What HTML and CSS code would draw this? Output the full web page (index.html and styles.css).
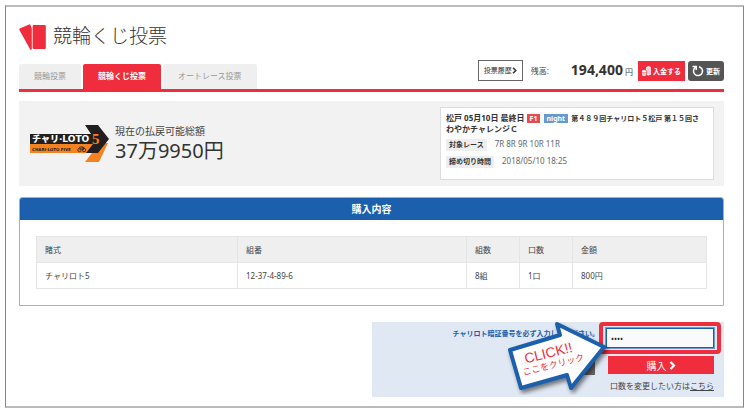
FILE: index.html
```html
<!DOCTYPE html>
<html lang="ja">
<head>
    <meta charset="UTF-8">
    <meta name="viewport" content="width=device-width, initial-scale=1.0">
    <title>競輪くじ投票</title>
    <link rel="stylesheet" href="styles.css">
</head>
<body>
    <div class="container">
        <h1 class="page-title">
            <svg class="ticket-icon" width="27" height="27" viewBox="0 0 27 27" fill="#f02d3c">
                <path d="M1.300 4.300 L10 .4 Q11 0 11.500 1 L12.800 4.500 V25 Q12.300 26.600 11.200 25.600 L.4 6 Q-.1 4.900 1.300 4.300Z"/>
                <rect x="13.600" y="1" width="13.200" height="24" rx="1"/>
            </svg>
            競輪くじ投票
        </h1>

        <div class="nav-bar">
            <nav class="tabs">
                <a class="tab" href="#">競輪投票</a>
                <a class="tab active" href="#">競輪くじ投票</a>
                <a class="tab" href="#">オートレース投票</a>
            </nav>
            <div class="account">
                <a class="history" href="#">投票履歴
                    <svg width="5" height="7" viewBox="0 0 5 7"><path d="M1 .8 L3.800 3.500 L1 6.200" fill="none" stroke="#333" stroke-width="1.500"/></svg>
                </a>
                <span class="balance-label">残高:</span>
                <span class="balance"><strong>194,400</strong> 円</span>
                <button class="btn deposit" type="button">
                    <svg width="9" height="10" viewBox="0 0 9 10" fill="#fff"><path d="M4 1.200 Q6.500 -.6 9 1.200 V8.600 Q6.500 10 4.800 9 V4.200 H4Z"/><path d="M0 4.600 Q2 3.400 4.200 4.600 V9.300 Q2 10.500 0 9.300Z"/><path d="M0 6.500 H4.200 M0 8.100 H4.200 M4.800 3 H9 M4.800 5 H9 M4.800 7 H9" stroke="#f02d3c" stroke-width=".5"/></svg>
                    入金する
                </button>
                <button class="btn reload" type="button">
                    <svg width="12" height="12" viewBox="0 0 12 12" fill="none" stroke="#fff" stroke-width="1.500"><path d="M7 1.700 A4.500 4.500 0 1 1 2.300 3.500 L3.800 1.700"/><path d="M.5 1.600 H4.200 V5"/></svg>
                    更新
                </button>
            </div>
        </div>

        <div class="summary">
            <svg class="loto-logo" width="80" height="38" viewBox="0 0 80 38">
                <path d="M0 18 H62 L78 18 L69 37 H55 L62 28 H0Z" fill="#f58220"/>
                <path d="M0 9 H61 L55 0 H68 L79 14 L68 28 H56 L63 19 H0Z" fill="#231f20"/>
                <text x="2" y="17" class="logo-name">チャリ·LOTO</text>
                <text x="62" y="19" class="logo-five">5</text>
                <text x="2" y="26" class="logo-sub">CHARI·LOTO FIVE</text>
                <g fill="none" stroke="#231f20" stroke-width=".8"><circle cx="49.500" cy="25" r="1.700"/><circle cx="54" cy="25" r="1.700"/><path d="M49 22.500 Q52 20.500 54.500 23 M49.500 25 L52 22.500 L54 25"/></g>
            </svg>
            <div class="payout">
                <div class="payout-label">現在の払戻可能総額</div>
                <div class="payout-amount">37万9950円</div>
            </div>
            <div class="race">
                <div class="race-title">
                    松戸 05月10日 最終日 <span class="badge grade">F1</span> <span class="badge night">night</span> <span class="race-name">第４８９回チャリロト５松戸 第１５回さ<br></span>わやかチャレンジＣ
                </div>
                <div class="race-row"><span class="race-key">対象レース</span>7R 8R 9R 10R 11R</div>
                <div class="race-row"><span class="race-key">締め切り時間</span>2018/05/10 18:25</div>
            </div>
        </div>

        <section class="purchase">
            <h2>購入内容</h2>
            <div class="purchase-body">
                <table>
                    <thead>
                        <tr>
                            <th class="col-type">賭式</th>
                            <th>組番</th>
                            <th class="col-count">組数</th>
                            <th class="col-count">口数</th>
                            <th class="col-price">金額</th>
                        </tr>
                    </thead>
                    <tbody>
                        <tr>
                            <td>チャリロト5</td>
                            <td>12-37-4-89-6</td>
                            <td>8組</td>
                            <td>1口</td>
                            <td>800円</td>
                        </tr>
                    </tbody>
                </table>
            </div>
        </section>

        <form class="confirm">
            <label class="pin-label" for="pin">チャリロト暗証番号を必ず入力してください。</label>
            <div class="pin-box"><input id="pin" type="password" value="1234"></div>
            <button class="back" type="button" aria-label="戻る"></button>
            <button class="buy" type="button">購入
                <svg width="7" height="9" viewBox="0 0 7 9"><path d="M1.500 1 L5 4.500 L1.500 8" fill="none" stroke="#fff" stroke-width="2.200"/></svg>
            </button>
            <p class="change">口数を変更したい方は<a href="#">こちら</a></p>

            <!-- arrow pointing at the PIN field -->
            <svg class="callout" width="108" height="76" viewBox="0 0 108 76">
                <path class="callout-arrow" d="M54 5 L101 28 L68 69 L64 56 L18 69 L7 31 L57 16Z"/>
                <g transform="rotate(-14 21 46)">
                    <text class="callout-click" x="23" y="45">CLICK!!</text>
                    <text class="callout-here" x="18" y="56">ここをクリック</text>
                </g>
            </svg>
        </form>
    </div>
</body>
</html>
```

FILE: styles.css
```css
* {
    box-sizing: border-box;
}

body {
    margin: 5px 6px 4px 5px;
    font-family: "Noto Sans", "Noto Sans CJK JP", sans-serif;
    font-size: 8px;
    line-height: 12px;
    color: #444;
    background-color: #fff;
}

button, input {
    font-family: inherit;
    font-size: 8px;
    margin: 0;
}

.container {
    padding: 15px 19px 9px 13px;
    border: 1px solid #858585;
    border-top: 2px solid #bbb;
    border-bottom: 2px solid #bbb;
}

.page-title {
    display: flex;
    align-items: center;
    gap: 7px;
    height: 28px;
    margin: 0 0 13px;
    font-size: 19px;
    line-height: 24px;
    font-weight: 300;
    color: #333;
}

.page-title .ticket-icon {
    margin-top: 2px;
}

/* tabs and balance */
.nav-bar {
    display: flex;
    justify-content: space-between;
    align-items: flex-start;
    border-bottom: 3px solid #f02d3c;
}

.tabs {
    display: flex;
    gap: 2px;
    padding-top: 1px;
}

.tab {
    padding: 6px 15px 7px;
    border-radius: 2px 2px 0 0;
    background-color: #efefef;
    color: #999;
    text-decoration: none;
}

.tab.active {
    background-color: #f02d3c;
    color: #fff;
    font-weight: bold;
}

.account {
    display: flex;
    align-items: center;
    margin-top: -3px;
}

.history {
    display: flex;
    align-items: center;
    height: 21px;
    padding: 0 5px;
    border: 1px solid #666;
    color: #333;
    font-size: 7px;
    text-decoration: none;
}

.balance-label {
    margin: 0 22px 0 8px;
}

.balance strong {
    font-size: 14px;
    color: #333;
}

.btn {
    display: flex;
    align-items: center;
    gap: 2px;
    height: 20px;
    padding: 0 4px;
    border: 0;
    color: #fff;
    font-size: 7px;
    font-weight: bold;
}

.deposit {
    margin: 0 3px 0 5px;
    background-color: #f02d3c;
}

.reload {
    border-radius: 3px;
    background-color: #555;
}

/* payout summary */
.summary {
    display: flex;
    align-items: center;
    margin-top: 9px;
    padding: 6px 10px 6px 11px;
    background-color: #f2f2f2;
}

.logo-name {
    font: 900 9px "DejaVu Sans", "Noto Sans CJK JP", sans-serif;
    fill: #fff;
}

.logo-five {
    font: bold 15px "Liberation Serif", serif;
    fill: #f58220;
}

.logo-sub {
    font: bold 4px "DejaVu Sans", sans-serif;
    fill: #231f20;
}

.payout {
    flex: 1;
    padding-left: 5px;
}

.payout-label {
    font-size: 10px;
    line-height: 14px;
}

.payout-amount {
    font-size: 20px;
    line-height: 26px;
    color: #333;
}

.race {
    width: 274px;
    min-height: 73px;
    padding: 5px 0 5px 5px;
    border: 1px solid #ddd;
    background-color: #fff;
}

.race-title {
    line-height: 10px;
    font-weight: bold;
    white-space: nowrap;
    color: #333;
}

.race-name {
    font-size: 7px;
}

.badge {
    margin-right: 1px;
    padding: 0 3px;
    color: #fff;
    font-size: 7px;
}

.grade {
    background-color: #e84a4f;
}

.night {
    background-color: #6699cc;
}

.race-row {
    margin-top: 4px;
    color: #666;
}

.race-key {
    display: inline-block;
    margin-right: 8px;
    padding: 0 3px;
    background-color: #eee;
    color: #333;
    font-size: 7px;
    font-weight: bold;
}

/* purchase table */
.purchase {
    margin-top: 11px;
    border: 1px solid #8fb3da;
    border-radius: 3px 3px 0 0;
}

.purchase h2 {
    margin: 0;
    border-radius: 2px 2px 0 0;
    background-color: #1c5fac;
    color: #fff;
    font-size: 10px;
    line-height: 22px;
    text-align: center;
}

.purchase-body {
    padding: 16px;
}

table {
    width: 100%;
    border-collapse: collapse;
    table-layout: fixed;
}

th, td {
    padding: 7px 8px 6px;
    border: 1px solid #e5e5e5;
    text-align: left;
    font-weight: normal;
}

th {
    background-color: #efefef;
}

.col-type {
    width: 30%;
}

.col-count {
    width: 53px;
}

.col-price {
    width: 20%;
}

/* PIN entry */
.confirm {
    position: relative;
    display: grid;
    grid-template-columns: 1fr 122px;
    align-items: start;
    width: 50%;
    min-width: 352px;
    margin: 16px 0 0 auto;
    padding: 0 3px 5px 0;
    background-color: #e0e8f3;
}

.pin-label {
    padding-top: 6px;
    font-size: 7px;
    font-weight: bold;
    text-align: right;
    white-space: nowrap;
    color: #1c5fac;
}

.pin-box {
    padding: 2px 3px;
    border: 4px solid #f02d3c;
    border-radius: 4px;
}

.pin-box input {
    display: block;
    width: 100%;
    height: 20px;
    padding: 0 4px;
    border: 1px solid #1c5fac;
    outline: 1px solid #6f9bd0;
    background-color: #fafafa;
    color: #222;
}

.back {
    justify-self: end;
    width: 60px;
    height: 17px;
    margin: 4px 4px 0 0;
    border: 0;
    background-color: #666;
}

.buy {
    display: flex;
    justify-content: center;
    align-items: center;
    gap: 2px;
    height: 18px;
    margin: 2px 7px 0 9px;
    border: 0;
    background-color: #f02d3c;
    color: #fff;
    font-size: 10px;
}

.change {
    grid-column: 1 / 3;
    margin: 5px 7px 0 0;
    text-align: right;
}

.change a {
    color: #444;
}

.callout {
    position: absolute;
    top: -3px;
    right: 113px;
}

.callout-arrow {
    fill: #fff;
    stroke: #1c5fac;
    stroke-width: 4px;
    stroke-linejoin: round;
    filter: drop-shadow(2px 3px 2px rgba(0, 0, 0, 0.5));
}

.callout-click {
    font: 14px "Liberation Sans", sans-serif;
    fill: #f02d3c;
}

.callout-here {
    font: 9px "Noto Sans CJK JP", sans-serif;
    fill: #f02d3c;
}
```
